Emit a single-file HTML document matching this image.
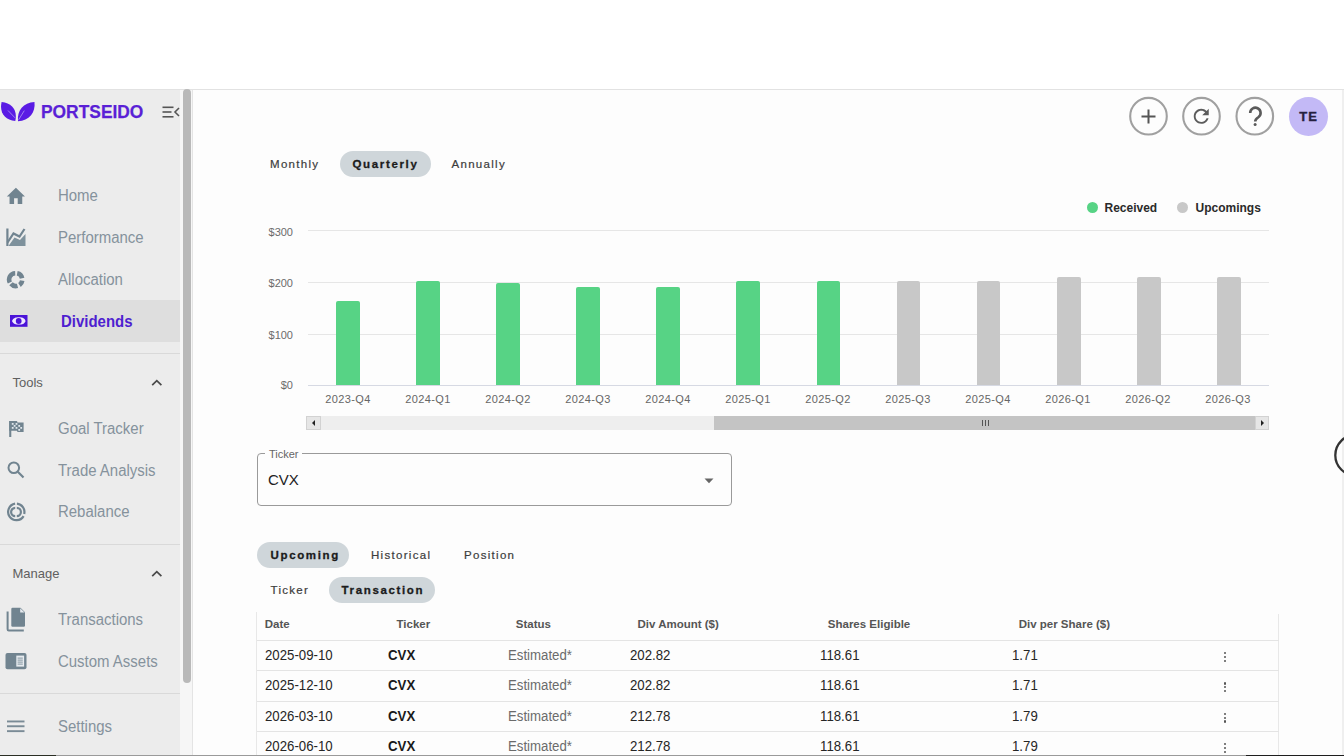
<!DOCTYPE html>
<html><head><meta charset="utf-8">
<style>
*{margin:0;padding:0;box-sizing:border-box}
html,body{width:1344px;height:756px;overflow:hidden;background:#fff;font-family:"Liberation Sans",sans-serif}
#root{position:relative;width:1344px;height:756px;overflow:hidden;background:#fff}
.a{position:absolute;white-space:nowrap}
#top{left:0;top:0;width:1344px;height:90px;background:#fff;border-bottom:1px solid #e2e2e2}
#side{left:0;top:90px;width:180px;height:666px;background:#ececec}
#strack{left:180px;top:90px;width:13px;height:666px;background:#f6f6f6;border-right:1px solid #e4e4e4}
#sthumb{left:183px;top:89px;width:7.5px;height:594px;background:#b9b9b9;border-radius:4px}
#main{left:193px;top:90px;width:1149px;height:666px;background:#fdfdfd}
#rstrip{left:1342px;top:90px;width:2px;height:666px;background:#efefef}
.nav{font-size:16px;color:#85929c;line-height:1;transform:scaleX(0.935);transform-origin:0 0}
.sec{font-size:13px;color:#5f5f5f;line-height:1}
.div{left:0;width:180px;height:1.6px;background:#d9d9d9}
.ico{position:absolute}
.ptab{font-size:11.5px;color:#3c3c3c;letter-spacing:1.3px;line-height:1;-webkit-text-stroke:0.2px #3c3c3c}
.pill{background:#cfd6da;border-radius:13px;height:26px}
.pb{font-weight:bold;color:#1c1c1c;letter-spacing:1.65px;-webkit-text-stroke:0.3px #1c1c1c}
.yl{font-size:11px;color:#6b6b6b;line-height:1;text-align:right;width:40px}
.xl{font-size:11px;color:#666;letter-spacing:0.4px;line-height:1;text-align:center;width:80px}
.grid{left:308px;width:961px;height:1px;background:#e6e6e6}
.bar{width:23.8px;border-radius:2px 2px 0 0}
.g{background:#57d385}
.u{background:#c8c8c8}
.th{font-size:11.5px;font-weight:bold;color:#555;line-height:1}
.td{font-size:14px;color:#262626;line-height:1;transform:scaleX(0.945);transform-origin:0 0}
.tb{font-weight:bold;color:#1a1a1a}
.st{color:#6b6b6b}
.rb{left:257px;width:1022px;height:1px;background:#e4e4e4}
.kb{width:2.4px;height:2.4px;background:#555;border-radius:50%}
.cbtn{width:38.5px;height:38.5px;border:1.9px solid #9a9a9a;border-radius:50%}
</style></head>
<body><div id="root">
<div id="top" class="a"></div>
<div id="side" class="a"></div>
<div id="strack" class="a"></div>
<div id="sthumb" class="a"></div>
<div id="main" class="a"></div>
<div id="rstrip" class="a"></div>

<!-- logo -->
<svg class="ico" style="left:0;top:96px" width="40" height="30" viewBox="0 96 40 30">
  <path d="M1.6 102 C12.2 103 17.7 110.6 15.3 121 C4.7 120 -0.8 112.4 1.6 102 Z" fill="#5a1be4"/>
  <path d="M34.5 102 C35.65 112.96 29.05 120.6 18 121.2 C16.85 110.2 23.45 102.56 34.5 102 Z" fill="#5a1be4"/>
  <path d="M8 110.5 L15 117.8" stroke="#a78af0" stroke-width="0.9" fill="none"/>
  <path d="M24.3 110.6 L18.6 119.8" stroke="#a78af0" stroke-width="0.9" fill="none"/>
</svg>
<div class="a" style="left:41px;top:101.5px;font-size:19px;font-weight:bold;color:#5a1fd6;line-height:1;transform:scaleX(0.915);transform-origin:0 0;-webkit-text-stroke:0.25px #5a1fd6">PORTSEIDO</div>
<svg class="ico" style="left:162px;top:105px" width="18" height="14" viewBox="0 0 18 14">
  <rect x="0.5" y="1.5" width="11" height="1.6" fill="#555"/>
  <rect x="0.5" y="6.2" width="9" height="1.6" fill="#555"/>
  <rect x="0.5" y="11" width="11" height="1.6" fill="#555"/>
  <path d="M17 3 L13 7 L17 11" stroke="#555" stroke-width="1.6" fill="none"/>
</svg>

<!-- nav -->
<svg class="ico" style="left:5.1px;top:184.6px" width="21.8" height="22.8" viewBox="0 0 24 24" preserveAspectRatio="none"><path d="M10 20v-6h4v6h5v-8h3L12 3 2 12h3v8z" fill="#718490"/></svg>
<div class="a nav" style="left:58px;top:188.2px">Home</div>

<svg class="ico" style="left:0;top:222px" width="32" height="28" viewBox="0 0 32 28">
  <rect x="6.3" y="6.5" width="2.2" height="17.5" fill="#718490"/>
  <path d="M7.5 20.5 L13.5 11.5 L19.5 14.5 L24.5 7" stroke="#718490" stroke-width="2.2" fill="none"/>
  <path d="M8.5 24 L14.5 15.5 L20 18 L25.5 12 L25.5 24 Z" fill="#7e919c"/>
</svg>
<div class="a nav" style="left:58px;top:229.8px">Performance</div>

<svg class="ico" style="left:6px;top:270px" width="20" height="20" viewBox="0 0 20 20">
  <g fill="none" stroke="#718490" stroke-width="4.6">
    <path d="M9.2 3.2 A6.3 6.3 0 0 0 3.9 12.5"/>
    <path d="M11.2 3.3 A6.3 6.3 0 0 1 16.1 8.3"/>
    <path d="M16.2 10.6 A6.3 6.3 0 0 1 13.5 15"/>
    <path d="M11.5 15.9 A6.3 6.3 0 0 1 5 13.8"/>
  </g>
</svg>
<div class="a nav" style="left:58px;top:272.0px">Allocation</div>

<div class="a" style="left:0;top:300px;width:180px;height:42px;background:#dedede"></div>
<svg class="ico" style="left:10px;top:315px" width="18" height="12" viewBox="0 0 18 12">
  <rect x="0" y="0" width="17.5" height="11.8" fill="#4a12d8"/>
  <path d="M2 6 C3.2 2.9 5.8 2.3 8.9 2.3 C12 2.3 14.6 2.9 15.6 6 C14.6 9.1 12 9.6 8.9 9.6 C5.8 9.6 3.2 9.1 2 6 Z" fill="#eee6ff"/>
  <circle cx="8.7" cy="6" r="2.9" fill="#4a12d8"/>
</svg>
<div class="a nav" style="left:61px;top:313.6px;font-weight:bold;color:#4e1fd0">Dividends</div>

<div class="a div" style="top:352.7px"></div>
<div class="a sec" style="left:12.5px;top:376.2px">Tools</div>
<svg class="ico" style="left:150px;top:378px" width="14" height="9" viewBox="0 0 14 9"><path d="M2.2 7.2 L6.8 2.6 L11.4 7.2" stroke="#4a4a4a" stroke-width="1.7" fill="none"/></svg>

<svg class="ico" style="left:8px;top:420px" width="17" height="18" viewBox="0 0 17 18">
  <rect x="1.2" y="1" width="2.1" height="16" fill="#718490"/>
  <path d="M1.2 1 L9 1 L9.5 2.5 L15.6 2.5 L15.6 12 L9.5 12 L9 10.8 L1.2 10.8 Z" fill="#718490"/>
  <g fill="#dfe6ec">
    <rect x="3.8" y="3" width="1.8" height="1.8"/><rect x="7.6" y="3" width="1.8" height="1.8"/>
    <rect x="5.7" y="5" width="1.8" height="1.8"/><rect x="10.3" y="5" width="1.8" height="1.8"/>
    <rect x="3.8" y="7" width="1.8" height="1.8"/><rect x="7.6" y="7" width="1.8" height="1.8"/>
    <rect x="12.3" y="7" width="1.8" height="1.8"/><rect x="10.3" y="9" width="1.8" height="1.8"/>
  </g>
</svg>
<div class="a nav" style="left:58px;top:420.6px">Goal Tracker</div>

<svg class="ico" style="left:6px;top:460px" width="20" height="20" viewBox="0 0 20 20">
  <circle cx="7.8" cy="7.8" r="5.3" stroke="#718490" stroke-width="2" fill="none"/>
  <path d="M11.8 11.8 L17.5 17.5" stroke="#718490" stroke-width="2.2"/>
</svg>
<div class="a nav" style="left:58px;top:462.7px">Trade Analysis</div>

<svg class="ico" style="left:5px;top:501px" width="22" height="22" viewBox="0 0 22 22">
  <g fill="none" stroke="#718490" stroke-width="2.2">
    <path d="M10.1 2.7 A8.3 8.3 0 1 0 18.6 15.1"/>
    <path d="M11.9 2.7 A8.3 8.3 0 0 1 19.2 12.9"/>
    <path d="M10.2 6.9 A4.1 4.1 0 0 0 10.2 15.1"/>
    <path d="M11.8 6.9 A4.1 4.1 0 0 1 11.8 15.1"/>
  </g>
</svg>
<div class="a nav" style="left:58px;top:504.2px">Rebalance</div>

<div class="a div" style="top:543.7px"></div>
<div class="a sec" style="left:12.5px;top:566.5px">Manage</div>
<svg class="ico" style="left:150px;top:569px" width="14" height="9" viewBox="0 0 14 9"><path d="M2.2 7.2 L6.8 2.6 L11.4 7.2" stroke="#4a4a4a" stroke-width="1.7" fill="none"/></svg>

<svg class="ico" style="left:5px;top:606px" width="22" height="26" viewBox="0 0 22 26">
  <path d="M2.6 5.5 L2.6 23.2 Q2.6 24.4 3.8 24.4 L18.8 24.4" stroke="#718490" stroke-width="2" fill="none"/>
  <path d="M7.5 1.7 L15.5 1.7 L20 6.2 L20 19.5 Q20 20.7 18.8 20.7 L7.5 20.7 Q6.3 20.7 6.3 19.5 L6.3 2.9 Q6.3 1.7 7.5 1.7 Z" fill="#718490"/>
  <path d="M15.2 2.2 L19.5 6.5 L15.2 6.5 Z" fill="#e4e9ee"/>
</svg>
<div class="a nav" style="left:58px;top:611.8px">Transactions</div>

<svg class="ico" style="left:5px;top:652px" width="23" height="19" viewBox="0 0 23 19">
  <rect x="0.5" y="1" width="21" height="16.3" rx="2" fill="#718490"/>
  <rect x="11.3" y="3.6" width="7.8" height="11" fill="#e6ebef"/>
  <g fill="#8495a0"><rect x="12.6" y="5.6" width="5.2" height="1"/><rect x="12.6" y="7.6" width="5.2" height="1"/><rect x="12.6" y="9.6" width="5.2" height="1"/><rect x="12.6" y="11.6" width="5.2" height="1"/></g>
</svg>
<div class="a nav" style="left:58px;top:653.5px">Custom Assets</div>

<div class="a div" style="top:692.7px"></div>
<svg class="ico" style="left:6px;top:719px" width="20" height="15" viewBox="0 0 20 15">
  <rect x="1" y="1.5" width="17.5" height="1.9" fill="#7a8b96"/>
  <rect x="1" y="6.3" width="17.5" height="1.9" fill="#7a8b96"/>
  <rect x="1" y="11.2" width="17.5" height="1.9" fill="#7a8b96"/>
</svg>
<div class="a nav" style="left:58px;top:718.9px">Settings</div>

<!-- top right buttons -->
<svg class="ico" style="left:1120px;top:90px" width="170" height="55" viewBox="1120 90 170 55"><g fill="none" stroke="#a0a0a0" stroke-width="2.1"><circle cx="1148.5" cy="116.2" r="18.3"/><circle cx="1201.5" cy="116.2" r="18.3"/><circle cx="1254.8" cy="116.2" r="18.3"/></g></svg>
<svg class="ico" style="left:1139px;top:107px" width="19" height="19" viewBox="0 0 19 19"><path d="M9.5 2.5 V16.5 M2.5 9.5 H16.5" stroke="#555" stroke-width="2"/></svg>

<svg class="ico" style="left:1190.2px;top:104.9px" width="22.5" height="22.5" viewBox="0 0 24 24"><path d="M17.65 6.35C16.2 4.9 14.21 4 12 4c-4.42 0-7.99 3.58-7.99 8s3.57 8 7.99 8c3.73 0 6.84-2.55 7.73-6h-2.08c-.82 2.33-3.04 4-5.65 4-3.31 0-6-2.69-6-6s2.69-6 6-6c1.66 0 3.14.69 4.22 1.78L13 11h7V4l-2.35 2.35z" fill="#5c5c5c"/></svg>

<svg class="ico" style="left:1240px;top:102px" width="30" height="28" viewBox="1240 102 30 28"><path d="M1250.2 112.9 A5.2 5.2 0 1 1 1258.6 117 C1256.4 118.5 1255.2 119.2 1255.2 121.6" stroke="#5a5a5a" stroke-width="2.6" fill="none"/><circle cx="1255.1" cy="124.5" r="1.5" fill="#5a5a5a"/></svg>
<div class="a" style="left:1288.5px;top:97px;width:39px;height:39px;border-radius:50%;background:#c3b9f6"></div>
<div class="a" style="left:1288.5px;top:110px;width:39px;text-align:center;font-size:13px;font-weight:bold;color:#25203f;letter-spacing:1px;line-height:1;padding-left:1px;-webkit-text-stroke:0.35px #25203f">TE</div>

<!-- period tabs -->
<div class="a ptab" style="left:270px;top:159.2px">Monthly</div>
<div class="a pill" style="left:340px;top:151px;width:91px"></div>
<div class="a ptab pb" style="left:352.5px;top:159.2px">Quarterly</div>
<div class="a ptab" style="left:451.5px;top:159.2px">Annually</div>

<!-- legend -->
<div class="a" style="left:1087px;top:202px;width:11px;height:11px;border-radius:50%;background:#57d385"></div>
<div class="a" style="left:1104.5px;top:202px;font-size:12px;font-weight:bold;color:#2a2a2a;line-height:1">Received</div>
<div class="a" style="left:1177px;top:202px;width:11px;height:11px;border-radius:50%;background:#c8c8c8"></div>
<div class="a" style="left:1195.5px;top:202px;font-size:12px;font-weight:bold;color:#2a2a2a;line-height:1">Upcomings</div>

<!-- chart -->
<div class="a grid" style="top:230px"></div>
<div class="a grid" style="top:282px"></div>
<div class="a grid" style="top:334px"></div>
<div class="a grid" style="top:385px;background:#d6d9e3"></div>
<div class="a yl" style="left:253px;top:226.8px">$300</div>
<div class="a yl" style="left:253px;top:278.3px">$200</div>
<div class="a yl" style="left:253px;top:329.5px">$100</div>
<div class="a yl" style="left:253px;top:380.3px">$0</div>

<div class="a bar g" style="left:335.9px;top:300.6px;height:84.4px"></div>
<div class="a bar g" style="left:416.0px;top:280.5px;height:104.5px"></div>
<div class="a bar g" style="left:496.1px;top:283.4px;height:101.6px"></div>
<div class="a bar g" style="left:576.2px;top:287.4px;height:97.6px"></div>
<div class="a bar g" style="left:656.3px;top:287.4px;height:97.6px"></div>
<div class="a bar g" style="left:736.4px;top:281.3px;height:103.7px"></div>
<div class="a bar g" style="left:816.5px;top:281.3px;height:103.7px"></div>
<div class="a bar u" style="left:896.6px;top:281.3px;height:103.7px"></div>
<div class="a bar u" style="left:976.7px;top:281.3px;height:103.7px"></div>
<div class="a bar u" style="left:1056.8px;top:276.7px;height:108.3px"></div>
<div class="a bar u" style="left:1136.9px;top:276.7px;height:108.3px"></div>
<div class="a bar u" style="left:1217.0px;top:276.7px;height:108.3px"></div>

<div class="a xl" style="left:308px;top:393.8px">2023-Q4</div>
<div class="a xl" style="left:388px;top:393.8px">2024-Q1</div>
<div class="a xl" style="left:468px;top:393.8px">2024-Q2</div>
<div class="a xl" style="left:548px;top:393.8px">2024-Q3</div>
<div class="a xl" style="left:628px;top:393.8px">2024-Q4</div>
<div class="a xl" style="left:708px;top:393.8px">2025-Q1</div>
<div class="a xl" style="left:788px;top:393.8px">2025-Q2</div>
<div class="a xl" style="left:868px;top:393.8px">2025-Q3</div>
<div class="a xl" style="left:948px;top:393.8px">2025-Q4</div>
<div class="a xl" style="left:1028px;top:393.8px">2026-Q1</div>
<div class="a xl" style="left:1108px;top:393.8px">2026-Q2</div>
<div class="a xl" style="left:1188px;top:393.8px">2026-Q3</div>

<!-- chart scrollbar -->
<div class="a" style="left:306px;top:416px;width:963px;height:14px;background:#eeeeee"></div>
<div class="a" style="left:306px;top:416px;width:15px;height:14px;background:#e6e6e6;border:1px solid #d2d2d2"></div>
<svg class="ico" style="left:310px;top:419px" width="8" height="8" viewBox="0 0 8 8"><path d="M5 1 L2 4 L5 7 Z" fill="#222"/></svg>
<div class="a" style="left:714px;top:416px;width:541px;height:14px;background:#c4c4c4"></div>
<div class="a" style="left:981.5px;top:419.5px;width:1.3px;height:6px;background:#555"></div>
<div class="a" style="left:984.5px;top:419.5px;width:1.3px;height:6px;background:#555"></div>
<div class="a" style="left:987.5px;top:419.5px;width:1.3px;height:6px;background:#555"></div>
<div class="a" style="left:1255px;top:416px;width:14px;height:14px;background:#e6e6e6;border:1px solid #d2d2d2"></div>
<svg class="ico" style="left:1258px;top:419px" width="8" height="8" viewBox="0 0 8 8"><path d="M3 1 L6 4 L3 7 Z" fill="#222"/></svg>

<!-- ticker select -->
<div class="a" style="left:257px;top:453px;width:475px;height:53px;border:1px solid #9a9a9a;border-radius:4px"></div>
<div class="a" style="left:265px;top:448px;width:37px;height:8px;background:#fdfdfd"></div>
<div class="a" style="left:269px;top:448.6px;font-size:11px;color:#666;line-height:1">Ticker</div>
<div class="a" style="left:268px;top:471.9px;font-size:15px;color:#222;line-height:1">CVX</div>
<svg class="ico" style="left:702px;top:476px" width="14" height="10" viewBox="0 0 14 10"><path d="M2.5 2.5 L7 7.2 L11.5 2.5 Z" fill="#666"/></svg>

<!-- tabs -->
<div class="a pill" style="left:257px;top:542px;width:92px"></div>
<div class="a ptab pb" style="left:270.5px;top:549.9px">Upcoming</div>
<div class="a ptab" style="left:371px;top:549.9px">Historical</div>
<div class="a ptab" style="left:464px;top:549.9px">Position</div>
<div class="a ptab" style="left:270.5px;top:584.5px">Ticker</div>
<div class="a pill" style="left:329px;top:577px;width:106px"></div>
<div class="a ptab pb" style="left:341.5px;top:584.5px">Transaction</div>

<!-- table -->
<div class="a" style="left:256px;top:612px;width:1px;height:144px;background:#e8e8e8"></div>
<div class="a" style="left:1278px;top:614px;width:1px;height:142px;background:#e8e8e8"></div>
<div class="a th" style="left:264.8px;top:619.1px">Date</div>
<div class="a th" style="left:396.5px;top:619.1px">Ticker</div>
<div class="a th" style="left:515.8px;top:619.1px">Status</div>
<div class="a th" style="left:637.5px;top:619.1px">Div Amount ($)</div>
<div class="a th" style="left:827.8px;top:619.1px">Shares Eligible</div>
<div class="a th" style="left:1018.7px;top:619.1px">Div per Share ($)</div>
<div class="a rb" style="top:640px"></div>
<div class="a rb" style="top:670px"></div>
<div class="a rb" style="top:701px"></div>
<div class="a rb" style="top:731px"></div>

<div class="a td" style="left:264.6px;top:648.1px">2025-09-10</div>
<div class="a td tb" style="left:388.4px;top:648.1px">CVX</div>
<div class="a td st" style="left:507.8px;top:648.1px">Estimated*</div>
<div class="a td" style="left:629.8px;top:648.1px">202.82</div>
<div class="a td" style="left:820px;top:648.1px">118.61</div>
<div class="a td" style="left:1011.8px;top:648.1px">1.71</div>
<div class="a kb" style="left:1223.5px;top:652.0px"></div><div class="a kb" style="left:1223.5px;top:655.9px"></div><div class="a kb" style="left:1223.5px;top:659.8px"></div>
<div class="a td" style="left:264.6px;top:678.4px">2025-12-10</div>
<div class="a td tb" style="left:388.4px;top:678.4px">CVX</div>
<div class="a td st" style="left:507.8px;top:678.4px">Estimated*</div>
<div class="a td" style="left:629.8px;top:678.4px">202.82</div>
<div class="a td" style="left:820px;top:678.4px">118.61</div>
<div class="a td" style="left:1011.8px;top:678.4px">1.71</div>
<div class="a kb" style="left:1223.5px;top:682.2px"></div><div class="a kb" style="left:1223.5px;top:686.1px"></div><div class="a kb" style="left:1223.5px;top:690.0px"></div>
<div class="a td" style="left:264.6px;top:708.7px">2026-03-10</div>
<div class="a td tb" style="left:388.4px;top:708.7px">CVX</div>
<div class="a td st" style="left:507.8px;top:708.7px">Estimated*</div>
<div class="a td" style="left:629.8px;top:708.7px">212.78</div>
<div class="a td" style="left:820px;top:708.7px">118.61</div>
<div class="a td" style="left:1011.8px;top:708.7px">1.79</div>
<div class="a kb" style="left:1223.5px;top:712.6px"></div><div class="a kb" style="left:1223.5px;top:716.5px"></div><div class="a kb" style="left:1223.5px;top:720.4px"></div>
<div class="a td" style="left:264.6px;top:739.0px">2026-06-10</div>
<div class="a td tb" style="left:388.4px;top:739.0px">CVX</div>
<div class="a td st" style="left:507.8px;top:739.0px">Estimated*</div>
<div class="a td" style="left:629.8px;top:739.0px">212.78</div>
<div class="a td" style="left:820px;top:739.0px">118.61</div>
<div class="a td" style="left:1011.8px;top:739.0px">1.79</div>
<div class="a kb" style="left:1223.5px;top:742.8px"></div><div class="a kb" style="left:1223.5px;top:746.7px"></div><div class="a kb" style="left:1223.5px;top:750.6px"></div>
<div class="a" style="left:0;top:754.5px;width:1344px;height:1.5px;background:#9a9a9a"></div>
<div class="a" style="left:0;top:754.5px;width:56px;height:1.5px;background:#2a2e24"></div>
<div class="a" style="left:1246px;top:754.5px;width:98px;height:1.5px;background:#1e1e1e"></div>
<svg class="ico" style="left:1320px;top:420px" width="24" height="70" viewBox="1320 420 24 70"><circle cx="1355.6" cy="455.2" r="20.3" fill="none" stroke="#333" stroke-width="2.3"/></svg>
</div>
</body></html>
